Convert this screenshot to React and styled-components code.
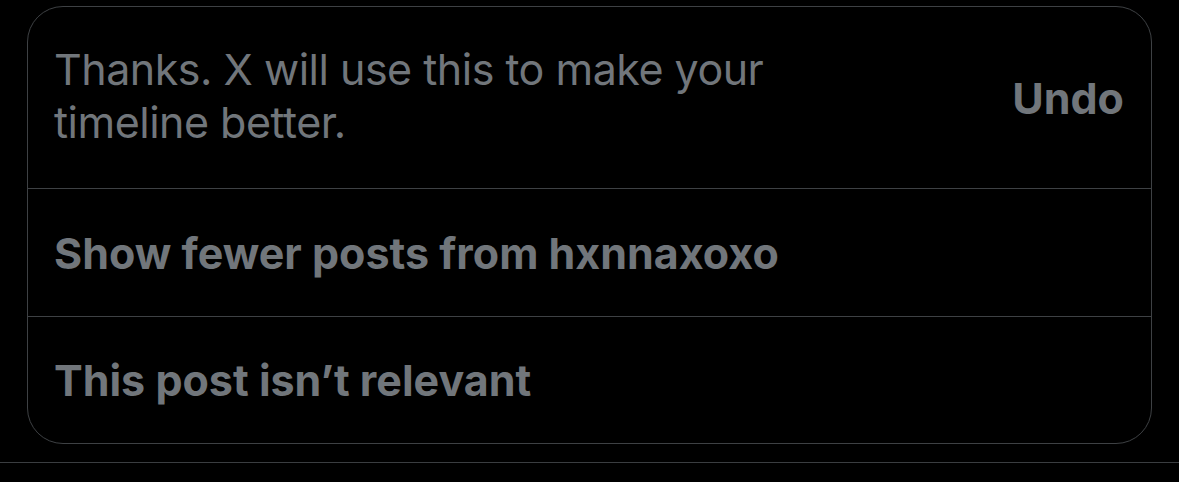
import React from 'react';
import styled, { createGlobalStyle } from 'styled-components';

const GlobalStyle = createGlobalStyle`
  html, body {
    margin: 0;
    padding: 0;
    background: #000;
  }
  body {
    font-family: Inter, "Noto Sans", "Liberation Sans", sans-serif;
    -webkit-font-smoothing: antialiased;
  }
`;

const Section = styled.div`
  padding: 6px 27px 18px 27px;
  border-bottom: 1px solid #3a3d40;
`;

const Card = styled.div`
  border: 1px solid #3e4144;
  border-radius: 36px;
  overflow: hidden;
`;

const Row = styled.div`
  display: flex;
  align-items: center;
  justify-content: space-between;
  height: ${({ h }) => h}px;
  padding: 0 27px 0 26px;
  box-sizing: border-box;
  border-top: ${({ first }) => (first ? 'none' : '1px solid #3e4144')};
`;

const Message = styled.div`
  color: #71767b;
  font-size: 43px;
  line-height: 53px;
  font-weight: 400;
  letter-spacing: -0.5px;
  max-width: 730px;
  margin-top: -4px;
`;

const Action = styled.div`
  color: #71767b;
  font-size: 43px;
  font-weight: 700;
`;

const Option = styled.div`
  color: #71767b;
  font-size: 43px;
  font-weight: 700;
`;

export default function App() {
  return (
    <>
      <GlobalStyle />
      <Section>
        <Card>
          <Row first h={181}>
            <Message>Thanks. X will use this to make your timeline better.</Message>
            <Action>Undo</Action>
          </Row>
          <Row h={128}>
            <Option>Show fewer posts from hxnnaxoxo</Option>
          </Row>
          <Row h={127}>
            <Option>This post isn’t relevant</Option>
          </Row>
        </Card>
      </Section>
    </>
  );
}
